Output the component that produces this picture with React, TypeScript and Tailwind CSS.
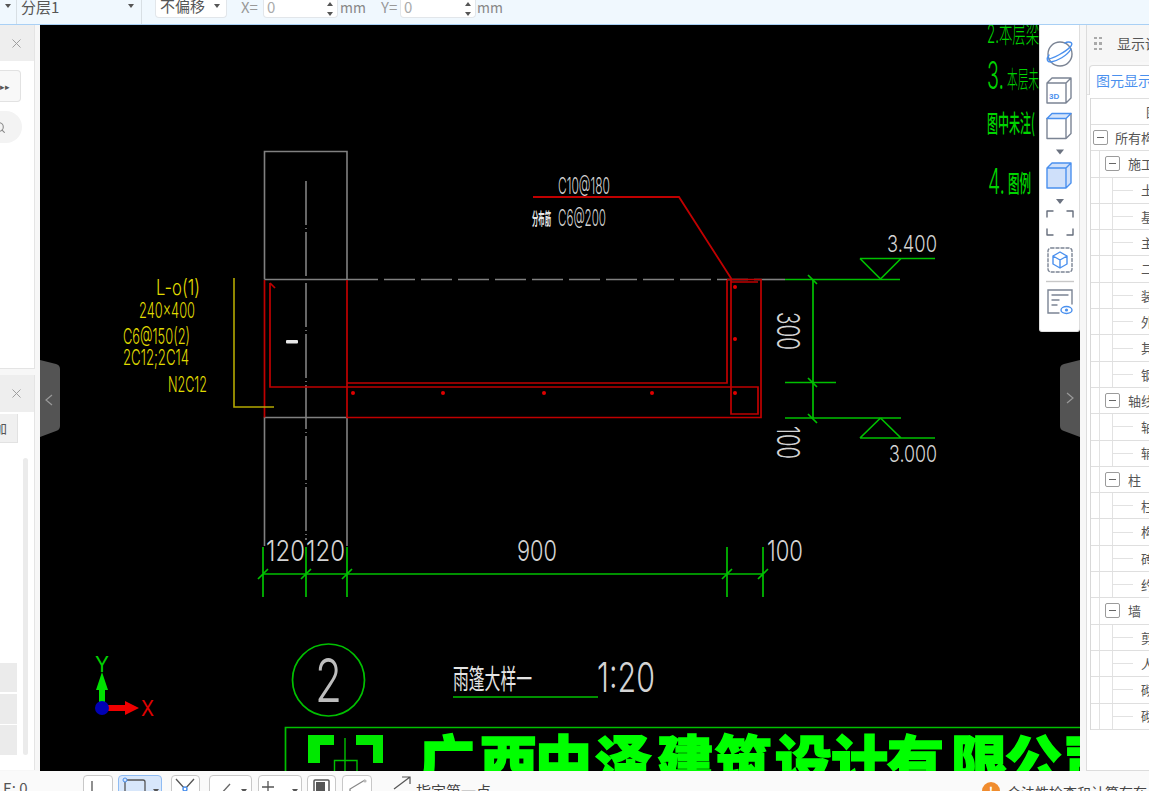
import React from "react";
import { X, Search } from "lucide-react";

const FONT = '"Noto Sans CJK SC","Liberation Sans",sans-serif';
const CAD = '"Inter","Liberation Sans","Noto Sans CJK SC",sans-serif';
const GREEN = "#00c000";
const RED = "#c00000";
const GRAY = "#808080";
const TXT = "#d4d4d4";
const YEL = "#e0dc00";

function T({ x, y, s, w, c, children, rot, weight = 300 }: { x: number; y: number; s: number; w: number; c: string; children: string; rot?: boolean; weight?: number }) {
  return (
    <text
      x={x}
      y={y}
      fontSize={s}
      fontFamily={CAD}
      fontWeight={weight}
      fill={c}
      textLength={w}
      lengthAdjust="spacingAndGlyphs"
      transform={rot ? `rotate(90 ${x} ${y})` : undefined}
    >
      {children}
    </text>
  );
}

function Drawing() {
  const dots = [[353, 393], [443, 393], [544, 393], [652, 393], [735, 287], [735, 339], [735, 393]];
  const ticksH = [263, 306, 347, 727, 763];
  return (
    <svg viewBox="40 25 1040 746" className="block w-full h-full" fill="none">
      {/* columns */}
      <g stroke={GRAY} strokeWidth="1.6">
        <path d="M264.5 279.5V151.5H347V279.5H264.5" />
        <path d="M264.5 546V417.5H347V546" />
        <path d="M306 181V540" strokeDasharray="44 3 1 3" />
        <path d="M347 279.5H785" strokeDasharray="31 6" />
      </g>
      {/* red section */}
      <g stroke={RED} strokeWidth="1.7">
        <path d="M264.5 280V417.5M347 280V417.5H761V279.5H727" />
        <path d="M270 283V387H347M347 383H727V280" />
        <path d="M347 387H758V414H731V280M731 282H758" />
        <path d="M270 283L275 288" />
        <path d="M533 197H679L731.5 279" strokeWidth="1.8" />
      </g>
      {dots.map(([x, y]) => (
        <circle key={x + "-" + y} cx={x} cy={y} r="2" fill="#e00000" />
      ))}
      {/* leader yellow */}
      <path d="M234 278V407H274" stroke="#b4a800" strokeWidth="1.6" />
      <rect x="286" y="340" width="12" height="3.5" rx="1" fill="#e8e8e8" />
      {/* green dims */}
      <g stroke={GREEN} strokeWidth="1.7">
        <path d="M785 279.5H900M785 382.5H836M785 418H901M813 279.5V418" />
        <path d="M860 258.5H935M860 258.5L880.5 279M901 258.5L880.5 279" />
        <path d="M860 438H935M860 438L880.5 418M901 438L880.5 418" />
        <path d="M808 275L817 284M808 378L817 387M808 414L817 423" />
        <path d="M263 574H763" />
        {ticksH.map((x) => (
          <path key={x} d={`M${x} 547V597M${x - 5} 579L${x + 5} 569`} />
        ))}
        <circle cx="328.5" cy="680" r="36" />
        <path d="M453 697H598M285.5 771V727.5H1080" />
      </g>
      {/* yellow notes */}
      <T x={156} y={295} s={22} w={44} c={YEL}>L-o(1)</T>
      <T x={139} y={318} s={22} w={56} c={YEL}>240x400</T>
      <T x={123} y={344} s={22} w={67} c={YEL}>C6@150(2)</T>
      <T x={123} y={365} s={22} w={66} c={YEL}>2C12;2C14</T>
      <T x={168} y={392} s={22} w={39} c={YEL}>N2C12</T>
      {/* leader notes */}
      <T x={558} y={194} s={23} w={52} c={TXT}>C10@180</T>
      <text x={532} y={225} fontSize={17} fontFamily={FONT} fontWeight={700} fill="#e8e8e8" textLength={19} lengthAdjust="spacingAndGlyphs">分布筋</text>
      <T x={558} y={226} s={23} w={48} c={TXT}>C6@200</T>
      {/* elevations */}
      <T x={887} y={252} s={23} w={50} c={TXT}>3.400</T>
      <T x={889} y={462} s={23} w={48} c={TXT}>3.000</T>
      <T x={777} y={312} s={31} w={38} c={TXT} rot>300</T>
      <T x={777} y={426} s={31} w={33} c={TXT} rot>100</T>
      <T x={266} y={561} s={29} w={39} c={TXT}>120</T>
      <T x={306} y={561} s={29} w={39} c={TXT}>120</T>
      <T x={517} y={561} s={29} w={40} c={TXT}>900</T>
      <T x={767} y={561} s={29} w={36} c={TXT}>100</T>
      {/* title */}
      <T x={315} y={702} s={60} w={27} c="#bdbdbd">2</T>
      <text x={453} y={689} fontSize={27} fontFamily={FONT} fontWeight={400} fill="#e4e4e4" textLength={79} lengthAdjust="spacingAndGlyphs">雨篷大样一</text>
      <T x={597} y={692} s={41} w={58} c={TXT}>1:20</T>
      {/* top right notes */}
      <T x={987} y={43} s={26} w={52} c="#00d400">2.本层梁</T>
      <T x={987} y={89} s={38} w={17} c="#00d400">3.</T>
      <T x={1007} y={88} s={24} w={32} c="#00d400">本层未</T>
      <text x={987} y={132} fontSize={24} fontFamily={FONT} fontWeight={500} fill="#00d400" textLength={48} lengthAdjust="spacingAndGlyphs">图中未注(</text>
      <T x={988} y={194} s={36} w={17} c="#00d400">4.</T>
      <text x={1008} y={192} fontSize={24} fontFamily={FONT} fontWeight={500} fill="#00d400" textLength={23} lengthAdjust="spacingAndGlyphs">图例</text>
      {/* axes */}
      <path d="M99 702V690H96L102 672L108 690H105V702Z" fill="#00e000" />
      <path d="M108 705H125V701L139 708L125 715V711H108Z" fill="#f00000" />
      <circle cx="102" cy="708" r="7" fill="#0000b4" />
      <T x={95} y={672} s={21} w={14} c="#00d000" weight={400}>Y</T>
      <T x={141} y={716} s={21} w={13} c="#e00000" weight={400}>X</T>
      {/* company logo */}
      <path d="M308 735H334V745H320V763H308Z" fill="#00e800" />
      <path d="M356 735H383V763H373V745H356Z" fill="#00e800" />
      <g stroke="#00c000" strokeWidth="1.4">
        <path d="M345 738V771M334.5 771V760.5H357V771" />
      </g>
      <text
        x="418 480 535 595 657 715 775 831 887 951 1005 1063"
        y={783}
        fontSize={57}
        fontFamily={FONT}
        fontWeight={900}
        fill="#00ff00"
        stroke="#00ff00"
        strokeWidth="1.6"
      >
        广西中泽建筑设计有限公司
      </text>
    </svg>
  );
}

const IC = "#7b8494";
const BL = "#4a90ee";

function ToolIcons() {
  return (
    <svg width="40" height="262" viewBox="0 0 40 262" fill="none" className="block shrink-0">
      <g strokeLinejoin="round" strokeLinecap="round" strokeWidth="1.4">
        <g transform="translate(0 1)">
          <circle cx="20" cy="28" r="12" stroke={IC} />
          <path d="M8 33C12 33 26 26 31 20C34 16 28 15 25 17M9 29C6 33 7 36 11 36C17 35 27 30 31 23" stroke={BL} />
        </g>
        <g transform="translate(0 3)">
          <path d="M7 55H26V75H7ZM7 55L12 50H31V70L26 75M26 55L31 50" stroke={IC} />
          <text x="9" y="71" fontSize="8" fontWeight="700" fontFamily='"Liberation Sans",sans-serif' fill={BL}>3D</text>
        </g>
        <g transform="translate(0 2.5)">
          <path d="M7 91V111H26V91M26 111L31 106V86" stroke={IC} />
          <path d="M7 91L12 86H31L26 91H7Z" stroke={BL} fill="#d4e4fb" />
          <path d="M16 122H24L20 127Z" fill="#6b7280" stroke="none" />
        </g>
        <g transform="translate(0 3)">
          <path d="M7 140H26V160H7ZM7 140L12 135H31V155L26 160M26 140L31 135" stroke={BL} fill="#cfe0fa" />
          <path d="M16 171H24L20 176Z" fill="#6b7280" stroke="none" />
        </g>
        <path d="M7 192V186H13M27 186H33V192M7 204V210H13M27 210H33V204" stroke="#666e7c" />
        <rect x="8" y="223" width="24" height="24" rx="3" stroke={IC} strokeDasharray="3 2" />
        <path d="M20 227L27 231V239L20 243L13 239V231ZM13 231L20 235L27 231M20 235V243" stroke={BL} />
        <path d="M6 256.5H34" stroke="#c8c8c8" strokeLinecap="butt" />
      </g>
    </svg>
  );
}

function ListEye() {
  return (
    <svg width="40" height="30" viewBox="0 0 40 30" fill="none" className="block shrink-0">
      <g strokeWidth="1.4" strokeLinecap="round">
        <path d="M19 26H8V3H32V17" stroke={IC} />
        <path d="M12 8H28M12 13H19M12 18H17" stroke={IC} />
        <ellipse cx="26.5" cy="23" rx="5.5" ry="3.5" stroke={BL} />
        <circle cx="26.5" cy="23" r="1.6" fill={BL} />
      </g>
    </svg>
  );
}

function Handle({ side }: { side: "l" | "r" }) {
  return (
    <svg width="20" height="77" viewBox="0 0 20 77" className="block">
      {side === "l" ? (
        <>
          <path d="M0 0L16 4Q20 5 20 9V66Q20 70 16 71L0 77Z" fill="#545454" />
          <path d="M12 35L6 40L12 45" stroke="#9a9a9a" strokeWidth="1.2" fill="none" />
        </>
      ) : (
        <>
          <path d="M20 0L4 4Q0 5 0 9V66Q0 70 4 71L20 77Z" fill="#545454" />
          <path d="M7 33L13 38L7 43" stroke="#9a9a9a" strokeWidth="1.2" fill="none" />
        </>
      )}
    </svg>
  );
}

const rows: [number, string][] = [
  [0, "所有构件"], [1, "施工段"], [2, "土方"], [2, "基础"], [2, "主体"], [2, "二次结构"], [2, "装修"], [2, "外墙"], [2, "其它"], [2, "钢筋"],
  [1, "轴线"], [2, "轴网"], [2, "辅助轴线"],
  [1, "柱"], [2, "柱"], [2, "构造柱"], [2, "砖柱"], [2, "约束"],
  [1, "墙"], [2, "剪力墙"], [2, "人防门框墙"], [2, "砌体墙"], [2, "砌体加筋"],
];

function MinusBox() {
  return (
    <span className="flex items-center justify-center w-[15px] h-[15px] shrink-0 rounded-[2px] border border-[#9b9b9b] bg-white">
      <span className="block w-[7px] h-px bg-[#666]" />
    </span>
  );
}

function Row({ level, label }: { level: number; label: string }) {
  return (
    <div className="flex items-center h-[26.3px] border-b border-[#dfdfdf] whitespace-nowrap text-[13px] text-[#555]">
      {level === 0 && (
        <>
          <span className="w-[2px] shrink-0" />
          <MinusBox />
          <span className="ml-[7px] shrink-0">{label}</span>
        </>
      )}
      {level === 1 && (
        <>
          <span className="w-[9px] h-full shrink-0 border-r border-[#e2e2e2]" />
          <span className="w-[5px] shrink-0" />
          <MinusBox />
          <span className="ml-[8px] shrink-0">{label}</span>
        </>
      )}
      {level === 2 && (
        <>
          <span className="w-[9px] h-full shrink-0 border-r border-[#e2e2e2]" />
          <span className="w-[13px] h-full shrink-0 border-r border-[#e2e2e2]" />
          <span className="w-[20px] h-px shrink-0 bg-[#e2e2e2]" />
          <span className="ml-[8px] shrink-0">{label}</span>
        </>
      )}
    </div>
  );
}

function Btn({ w, active, children }: { w: string; active?: boolean; children?: React.ReactNode }) {
  return (
    <div className={`${w} h-[28px] shrink-0 rounded-[4px] border ${active ? "border-[#8fbcf3] bg-[#d8e7fb]" : "border-[#c8c8c8] bg-white"}`}>
      {children}
    </div>
  );
}

function Caret({ className }: { className?: string }) {
  return <span className={`block w-0 h-0 border-l-[3.5px] border-r-[3.5px] border-t-[4px] border-l-transparent border-r-transparent border-t-[#555] ${className ?? ""}`} />;
}

export default function App() {
  return (
    <div className="w-[1149px] h-[791px] overflow-hidden flex flex-col bg-[#f6f6f6]" style={{ fontFamily: FONT }}>
      {/* top bar */}
      <div className="h-[25px] shrink-0 flex items-start bg-[#f0f8fe] border-b border-[#a9d0f5] text-[15px] text-[#888] overflow-hidden">
        <div className="w-[17px] h-full shrink-0 flex items-start justify-center pt-[4px] border-r border-[#d8dfe4]"><Caret /></div>
        <div className="w-[125px] h-full shrink-0 flex items-start justify-between pl-[4px] pr-[7px] border-r border-[#d8dfe4]">
          <span className="leading-[15px] -mt-[1px] text-[#555]">分层1</span>
          <Caret className="mt-[4px]" />
        </div>
        <div className="ml-[13px] w-[72px] h-[18px] shrink-0 flex items-center justify-between pl-[4px] pr-[6px] bg-white border border-t-0 border-[#e2e6ea] rounded-b-[4px]">
          <span className="text-[#555] leading-[15px] -mt-[6px]">不偏移</span>
          <Caret className="-mt-[6px]" />
        </div>
        <span className="ml-[14px] w-[22px] shrink-0 leading-[15px] -mt-[1px] text-[#999]">X=</span>
        <div className="w-[75px] h-[18px] shrink-0 flex items-start justify-between pl-[3px] pr-[4px] bg-white border border-t-0 border-[#e2e6ea] rounded-b-[4px]">
          <span className="text-[#aaa] leading-[15px] -mt-[1px]">0</span>
          <span className="flex flex-col gap-[6px] mt-[2px]"><Caret className="rotate-180" /><Caret /></span>
        </div>
        <span className="ml-[2px] w-[27px] shrink-0 leading-[15px] text-[14px] text-[#888]">mm</span>
        <span className="ml-[14px] w-[19px] shrink-0 leading-[15px] -mt-[1px] text-[#999]">Y=</span>
        <div className="w-[76px] h-[18px] shrink-0 flex items-start justify-between pl-[3px] pr-[4px] bg-white border border-t-0 border-[#e2e6ea] rounded-b-[4px]">
          <span className="text-[#aaa] leading-[15px] -mt-[1px]">0</span>
          <span className="flex flex-col gap-[6px] mt-[2px]"><Caret className="rotate-180" /><Caret /></span>
        </div>
        <span className="ml-[1px] leading-[15px] text-[14px] text-[#888]">mm</span>
      </div>

      {/* middle */}
      <div className="flex-1 min-h-0 flex">
        {/* left */}
        <div className="w-[40px] shrink-0 pr-[5px] flex flex-col gap-[6px] bg-[#f7f7f7] overflow-hidden">
          <div className="h-[344px] shrink-0 bg-white border-r border-b border-[#e4e4e4]">
            <div className="h-[36px] bg-[#eeeeee] flex items-center justify-end pr-[10px]">
              <X size={15} strokeWidth={1.5} className="text-[#9a9a9a]" />
            </div>
            <div className="mt-[9px] w-[21px] h-[32px] bg-[#f8f8f8] border border-l-0 border-[#e2e2e2] rounded-r-[4px] flex items-center text-[9px] leading-none text-[#555]">▸▸</div>
            <div className="mt-[9px] w-[22px] h-[32px] bg-[#f3f3f3] rounded-r-full overflow-hidden flex items-center">
              <Search size={13} className="-ml-[7px] shrink-0 text-[#888]" />
            </div>
          </div>
          <div className="h-[395px] shrink-0 bg-white border-r border-[#e4e4e4] flex flex-col">
            <div className="h-[37px] shrink-0 bg-[#eeeeee] flex items-center justify-end pr-[10px]">
              <X size={15} strokeWidth={1.5} className="text-[#9a9a9a]" />
            </div>
            <div className="mt-[2px] w-[18px] h-[29px] shrink-0 bg-[#f0f0f0] border-r border-b border-[#e2e2e2] overflow-hidden flex items-center justify-end pr-[10px] text-[13px] text-[#555]">
              <span className="whitespace-nowrap shrink-0">加</span>
            </div>
            <div className="flex-1 flex mt-[15px] mb-[15px] gap-[6px]">
              <div className="w-[17px] flex flex-col justify-end gap-[1.5px]">
                <div className="h-[29px] bg-[#ebebeb]" />
                <div className="h-[30px] bg-[#ebebeb]" />
                <div className="h-[30px] bg-[#ebebeb]" />
              </div>
              <div className="w-[5px] rounded-full bg-[#ebebeb]" />
            </div>
          </div>
        </div>

        {/* canvas */}
        <div className="relative w-[1040px] shrink-0 bg-black overflow-hidden">
          <Drawing />
          <div className="absolute left-0 top-[335px]"><Handle side="l" /></div>
          <div className="absolute right-0 top-[335px]"><Handle side="r" /></div>
          <div className="absolute right-0 top-0 w-[41px] h-[307px] bg-white border-x border-b border-[#dedede] rounded-b-[3px] flex flex-col">
            <ToolIcons />
            <ListEye />
          </div>
        </div>

        {/* right */}
        <div className="w-[69px] shrink-0 pl-[6px] bg-[#f7f7f7] overflow-hidden">
          <div className="h-full bg-white border-l border-b border-[#dcdcdc]">
            <div className="h-[37px] bg-[#f6f6f6] flex items-center pl-[7px] whitespace-nowrap">
              <span className="grid grid-cols-2 gap-x-[3px] gap-y-[3px] w-[7px] shrink-0">
                {[0, 1, 2, 3, 4, 5].map((i) => <span key={i} className="block w-[2.5px] h-[2.5px] bg-[#aaa]" />)}
              </span>
              <span className="ml-[16px] text-[14px] text-[#555]">显示设置</span>
            </div>
            <div className="h-[33px] pt-[3px] pl-[2px] bg-[#f8f8f8] border-b border-[#e4e4e4]">
              <div className="h-[30px] w-[80px] pl-[6px] bg-white border border-b-0 border-[#dcdcdc] rounded-t-[4px] flex items-center whitespace-nowrap text-[14px] text-[#4a90ee]">图元显示</div>
            </div>
            <div className="ml-[3px] mt-[3px] border-l border-[#d8d8d8] overflow-hidden">
              <div className="h-[27px] border-t border-b border-[#dfdfdf] pl-[55px] flex items-center whitespace-nowrap text-[13px] text-[#555]">图元</div>
              {rows.map(([l, t], i) => <Row key={i} level={l} label={t} />)}
            </div>
          </div>
        </div>
      </div>

      {/* bottom bar */}
      <div className="h-[20px] shrink-0 flex items-start bg-[#fafafa] overflow-hidden text-[13px] text-[#444]">
        <span className="w-[83px] shrink-0 pl-[3px] mt-[4px] text-[15px] leading-[26px] whitespace-nowrap text-[#555]">E: 0</span>
        <div className="flex items-start mt-[4px]">
          <Btn w="w-[30px]"><svg width="28" height="20" fill="none"><path d="M8 5V18H22" stroke="#555" strokeWidth="1.3" /></svg></Btn>
          <div className="ml-[5px]"><Btn w="w-[44px]" active>
            <div className="flex items-start">
              <svg width="30" height="20" fill="none"><path d="M6 4H24Q26 4 26 6V20M6 4V20" stroke="#555" strokeWidth="1.3" /><circle cx="6" cy="4" r="2" fill="#d8e7fb" stroke="#4a90ee" /></svg>
              <Caret className="mt-[13px] ml-[4px]" />
            </div>
          </Btn></div>
          <div className="ml-[9px]"><Btn w="w-[29px]"><svg width="27" height="20" fill="none"><path d="M4 3L13 13L22 3M13 13V20" stroke="#555" strokeWidth="1.3" /><circle cx="13" cy="13" r="2" fill="#fff" stroke="#4a90ee" strokeWidth="1.4" /></svg></Btn></div>
          <div className="ml-[9px]"><Btn w="w-[43px]">
            <div className="flex items-start">
              <svg width="28" height="20" fill="none"><path d="M10 19L20 8" stroke="#666" strokeWidth="1.3" /></svg>
              <Caret className="mt-[13px] ml-[3px]" />
            </div>
          </Btn></div>
          <div className="ml-[6px]"><Btn w="w-[44px]">
            <div className="flex items-start">
              <svg width="30" height="20" fill="none"><path d="M9 5V17M3 11H15" stroke="#555" strokeWidth="1.3" /></svg>
              <Caret className="mt-[13px] ml-[3px]" />
            </div>
          </Btn></div>
          <div className="ml-[5px]"><Btn w="w-[29px]"><svg width="27" height="20" fill="none"><rect x="6" y="4" width="15" height="20" stroke="#555" strokeWidth="1.5" rx="1" /><rect x="8" y="6" width="9" height="18" fill="#555" /></svg></Btn></div>
          <div className="ml-[6px]"><Btn w="w-[30px]"><svg width="28" height="20" fill="none"><path d="M7 20V13L22 4" stroke="#888" strokeWidth="1.3" /><circle cx="22" cy="5" r="1.6" fill="#bbb" /></svg></Btn></div>
        </div>
        <svg width="20" height="16" viewBox="0 0 20 16" fill="none" className="ml-[20px] mt-[4px] shrink-0">
          <path d="M2 14L18 2M10 2H18V9" stroke="#555" strokeWidth="1.2" />
        </svg>
        <span className="ml-[4px] mt-[10px] text-[15px] leading-[20px] whitespace-nowrap text-[#444]">指定第一点</span>
        <div className="ml-auto w-[167px] shrink-0 mt-[11px] flex items-start whitespace-nowrap overflow-hidden">
          <span className="w-[18px] h-[18px] shrink-0 rounded-full bg-[#f08c2e] text-white text-[12px] leading-[18px] text-center font-bold">!</span>
          <span className="ml-[7px] text-[14px] leading-[20px] text-[#444]">合法性检查和计算存在</span>
        </div>
      </div>
    </div>
  );
}
